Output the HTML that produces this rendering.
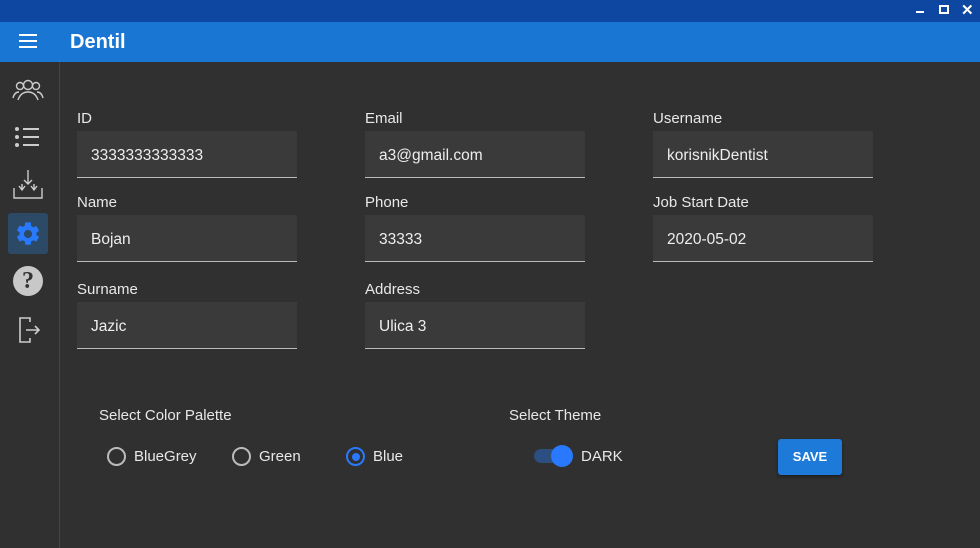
<!DOCTYPE html><html><head><style>
*{margin:0;padding:0;box-sizing:border-box}
body{width:980px;height:548px;background:#303030;font-family:"Liberation Sans",sans-serif;color:#e6e6e6;position:relative;overflow:hidden}
.tb{position:absolute;left:0;top:0;width:980px;height:22px;background:#0d47a1}
.ab{position:absolute;left:0;top:22px;width:980px;height:40px;background:#1976d2}
.side{position:absolute;left:59px;top:62px;width:1px;height:486px;background:#444}
.lbl{position:absolute;font-size:15px;color:#e8e8e8}
.f{position:absolute;width:220px;height:47px;background:#3a3a3a;border-bottom:1px solid #bbb;font-size:15.5px;color:#eee;padding-left:14px;line-height:49px}
.ic{position:absolute;left:12px}
</style></head><body>
<div class="tb">
<div style="position:absolute;left:916px;top:11px;width:8px;height:2px;background:#fff"></div>
<div style="position:absolute;left:939px;top:5px;width:10px;height:9px;border:2px solid #fff"></div>
<div style="position:absolute;left:961px;top:1px;color:#fff;font-size:15px;font-weight:bold">✕</div>
</div>
<div class="ab">
<div style="position:absolute;left:19px;top:12px;width:18px;height:2px;background:#fff;box-shadow:0 6px 0 #fff,0 12px 0 #fff"></div>
<div style="position:absolute;left:70px;top:9px;font-size:20px;font-weight:bold;color:#fff">Dentil</div>
</div>
<div class="side"></div>
<svg class="ic" style="top:78px" width="32" height="26" viewBox="0 0 32 26" fill="none" stroke="#ccc" stroke-width="1.4"><circle cx="16" cy="7" r="4.5"/><path d="M6 22c2-6 6-8 10-8s8 2 10 8"/><circle cx="8" cy="8" r="3.5"/><circle cx="24" cy="8" r="3.5"/><path d="M1 20c1-4 3-6 6-6M31 20c-1-4-3-6-6-6"/></svg>
<svg class="ic" style="top:124px" width="32" height="26" viewBox="0 0 32 26" fill="#ccc"><circle cx="5" cy="5" r="2"/><circle cx="5" cy="13" r="2"/><circle cx="5" cy="21" r="2"/><rect x="11" y="4" width="16" height="2"/><rect x="11" y="12" width="16" height="2"/><rect x="11" y="20" width="16" height="2"/></svg>
<svg class="ic" style="top:168px" width="32" height="32" viewBox="0 0 32 32" fill="none" stroke="#ccc" stroke-width="1.4"><path d="M2 20v10h28V20M16 2v14M12 12l4 4 4-4M7 18l3 4 3-4M10 22v-6M22 16v6M19 18l3 4 3-4"/></svg>
<div style="position:absolute;left:8px;top:213px;width:40px;height:41px;background:#2c4a66;border-radius:3px"></div>
<svg style="position:absolute;left:14px;top:220px" width="28" height="28" viewBox="0 0 24 24"><path fill="#2979ff" d="M19.14 12.94a7.5 7.5 0 0 0 0-1.880l2.03-1.58a.5.5 0 0 0 .12-.61l-1.920-3.32a.5.5 0 0 0-.59-.22l-2.39.96a7 7 0 0 0-1.62-.94l-.36-2.54A.5.5 0 0 0 13.9 2h-3.84a.5.5 0 0 0-.49.42l-.36 2.54c-.59.24-1.13.56-1.62.94l-2.39-.96a.5.5 0 0 0-.59.22L2.7 8.48a.5.5 0 0 0 .12.61l2.03 1.58a7.5 7.5 0 0 0 0 1.88l-2.03 1.58a.5.5 0 0 0-.12.61l1.92 3.32c.12.22.37.3.59.22l2.39-.96c.5.38 1.03.7 1.62.94l.36 2.54c.05.24.25.42.49.42h3.84c.24 0 .44-.18.49-.42l.36-2.54c.59-.24 1.13-.56 1.62-.94l2.39.96c.22.08.47 0 .59-.22l1.920-3.32a.5.5 0 0 0-.12-.61zM12 15.5A3.5 3.5 0 1 1 12 8.5a3.5 3.5 0 0 1 0 7z"/></svg>
<div style="position:absolute;left:13px;top:266px;width:30px;height:30px;border-radius:50%;background:#c8c8c8;color:#333;font-weight:bold;font-size:24px;text-align:center;line-height:31px;font-family:'Liberation Serif',serif">?</div>
<svg class="ic" style="left:18px;top:316px" width="24" height="28" viewBox="0 0 24 28" fill="none" stroke="#ccc" stroke-width="1.6"><path d="M12 6V2H2v24h10v-4M8 14h13M17 10l4 4-4 4"/></svg>
<div class="lbl" style="left:77px;top:110px">ID</div><div class="f" style="left:77px;top:131px">3333333333333</div>
<div class="lbl" style="left:365px;top:110px">Email</div><div class="f" style="left:365px;top:131px">a3@gmail.com</div>
<div class="lbl" style="left:653px;top:110px">Username</div><div class="f" style="left:653px;top:131px">korisnikDentist</div>
<div class="lbl" style="left:77px;top:194px">Name</div><div class="f" style="left:77px;top:215px">Bojan</div>
<div class="lbl" style="left:365px;top:194px">Phone</div><div class="f" style="left:365px;top:215px">33333</div>
<div class="lbl" style="left:653px;top:194px">Job Start Date</div><div class="f" style="left:653px;top:215px">2020-05-02</div>
<div class="lbl" style="left:77px;top:281px">Surname</div><div class="f" style="left:77px;top:302px">Jazic</div>
<div class="lbl" style="left:365px;top:281px">Address</div><div class="f" style="left:365px;top:302px">Ulica 3</div>
<div class="lbl" style="left:99px;top:407px">Select Color Palette</div>
<div class="lbl" style="left:509px;top:407px">Select Theme</div>
<div style="position:absolute;left:107px;top:447px;width:19px;height:19px;border:2px solid #bbb;border-radius:50%"></div>
<div class="lbl" style="left:134px;top:448px">BlueGrey</div>
<div style="position:absolute;left:232px;top:447px;width:19px;height:19px;border:2px solid #bbb;border-radius:50%"></div>
<div class="lbl" style="left:259px;top:448px">Green</div>
<div style="position:absolute;left:346px;top:447px;width:19px;height:19px;border:2px solid #2979ff;border-radius:50%"><div style="position:absolute;left:3.5px;top:3.5px;width:8px;height:8px;border-radius:50%;background:#2979ff"></div></div>
<div class="lbl" style="left:373px;top:448px">Blue</div>
<div style="position:absolute;left:534px;top:449px;width:34px;height:14px;border-radius:7px;background:#2c4e80"></div>
<div style="position:absolute;left:551px;top:445px;width:22px;height:22px;border-radius:50%;background:#2979ff"></div>
<div class="lbl" style="left:581px;top:448px">DARK</div>
<div style="position:absolute;left:778px;top:439px;width:64px;height:36px;background:#1e7ad8;border-radius:3px;color:#fff;font-size:13px;font-weight:bold;text-align:center;line-height:36px;box-shadow:0 2px 3px rgba(0,0,0,.4)">SAVE</div>
</body></html>
